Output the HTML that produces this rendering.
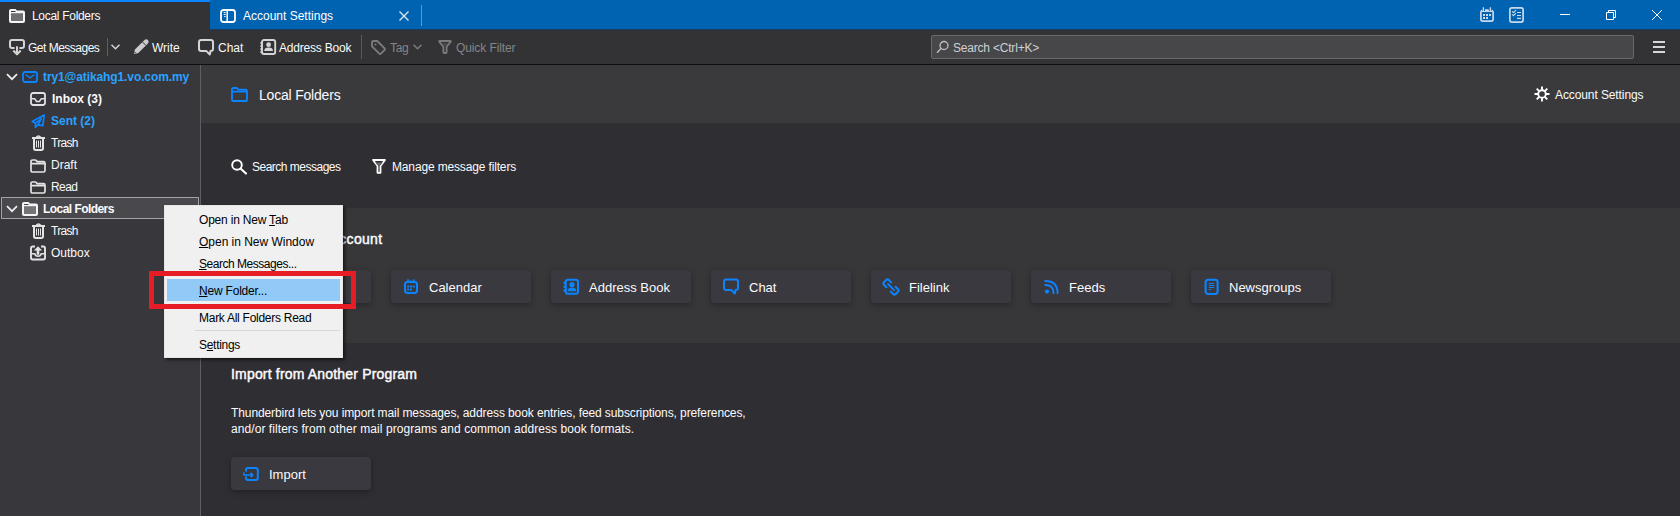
<!DOCTYPE html>
<html><head><meta charset="utf-8">
<style>
*{box-sizing:border-box;margin:0;padding:0}
html,body{width:1680px;height:516px;overflow:hidden;background:#2f2e33;font-family:"Liberation Sans",sans-serif;color:#f9f9fa}
.a{position:absolute}
.t{position:absolute;white-space:nowrap;line-height:1}
svg{position:absolute;overflow:visible}
</style></head><body>

<!-- titlebar -->
<div class="a" style="left:0;top:0;width:1680px;height:29px;background:#0063b1"></div>
<div class="a" style="left:0;top:0;width:210px;height:29px;background:#333335"></div>
<div class="a" style="left:0;top:0;width:210px;height:2px;background:#0a84ff"></div>
<div class="a" style="left:421px;top:5px;width:1px;height:21px;background:rgba(255,255,255,0.35)"></div>

<!-- toolbar -->
<div class="a" style="left:0;top:29px;width:1680px;height:35px;background:#333335"></div>
<div class="a" style="left:210px;top:29px;width:1470px;height:1px;background:#183d63"></div>
<div class="a" style="left:0;top:64px;width:1680px;height:1px;background:#0e0e0f"></div>

<!-- folder pane -->
<div class="a" style="left:0;top:65px;width:200px;height:451px;background:#38373c"></div>
<div class="a" style="left:200px;top:65px;width:1px;height:451px;background:#5f5e63"></div>

<!-- content sections -->
<div class="a" style="left:201px;top:65px;width:1479px;height:58px;background:#3a3a3d"></div>
<div class="a" style="left:201px;top:123px;width:1479px;height:85px;background:#2f2e33"></div>
<div class="a" style="left:201px;top:208px;width:1479px;height:135px;background:#373739"></div>
<div class="a" style="left:201px;top:343px;width:1479px;height:173px;background:#2f2e33"></div>


<!-- titlebar content -->
<svg style="left:9px;top:9px" width="16" height="14" viewBox="0 0 16 14"><path d="M0 2 Q0 0 2 0 H6.5 L8 1.5 H14 Q16 1.5 16 3.5 V12 Q16 14 14 14 H2 Q0 14 0 12 Z" fill="#f4f4f5"/><rect x="2" y="2" width="4.5" height="1" fill="#333335"/><rect x="2" y="4.2" width="12" height="7.8" fill="#6f6f72"/></svg>
<div class="t" style="left:32px;top:10px;font-size:12px;color:#fbfbfe;letter-spacing:-0.3px">Local Folders</div>

<svg style="left:220px;top:9px" width="16" height="14" viewBox="0 0 16 14"><rect x="1" y="1" width="14" height="12" rx="2.5" fill="none" stroke="#fff" stroke-width="1.8"/><path d="M7.2 1 V13" stroke="#fff" stroke-width="1.5"/><path d="M3.7 3.5 H5.6 M3.7 5.5 H5.6 M4.2 7.5 H5.6" stroke="#fff" stroke-width="1"/></svg>
<div class="t" style="left:243px;top:10px;font-size:12px;color:#fff">Account Settings</div>
<svg style="left:399px;top:11px" width="10" height="10" viewBox="0 0 10 10"><path d="M0.5 0.5 L9.5 9.5 M9.5 0.5 L0.5 9.5" stroke="#dce6f1" stroke-width="1.4"/></svg>

<svg style="left:1480px;top:7px" width="14" height="15" viewBox="0 0 14 15"><path d="M2.4 3.3 Q0.9 3.6 0.9 5.2 V12.2 Q0.9 14.1 2.8 14.1 H11.2 Q13.1 14.1 13.1 12.2 V5.2 Q13.1 3.6 11.6 3.3" fill="none" stroke="#c9d9ec" stroke-width="1.7"/><path d="M3.4 0.2 V4 M10.4 0.2 V4" stroke="#c9d9ec" stroke-width="1.3"/><path d="M5 2.3h3.8v1.6h-3.8z M3 6.9h2v2.1h-2z M6 6.9h2v2.1h-2z M9 6.9h2v2.1h-2z M3 10h2v2h-2z M6 10h2v2h-2z M1 4h12v0.9h-12z" fill="#c9d9ec"/></svg>
<svg style="left:1509px;top:7px" width="15" height="16" viewBox="0 0 15 16"><rect x="0.9" y="0.9" width="13.2" height="14.2" rx="2" fill="none" stroke="#c9d9ec" stroke-width="1.7"/><path d="M3.2 4.4 L4.5 5.7 L6.9 3.2 M3.2 7.4 L4.5 8.7 L6.9 6.2" fill="none" stroke="#c9d9ec" stroke-width="1.1"/><path d="M8 5 h4v1.1h-4z M8 8 h4v1.1h-4z M8 10.8 h4v1.1h-4z" fill="#c9d9ec"/></svg>
<div class="a" style="left:1560px;top:14px;width:10px;height:1px;background:#fff"></div>
<svg style="left:1606px;top:10px" width="10" height="10" viewBox="0 0 10 10"><path d="M0.5 2.5 H7.5 V9.5 H0.5 Z M2.5 2.5 V0.5 H9.5 V7.5 H7.5" fill="none" stroke="#fff" stroke-width="1"/></svg>
<svg style="left:1652px;top:10px" width="10" height="10" viewBox="0 0 10 10"><path d="M0 0 L10 10 M10 0 L0 10" stroke="#fff" stroke-width="1"/></svg>

<!-- toolbar content -->
<svg style="left:9px;top:39px" width="16" height="17" viewBox="0 0 16 17"><path d="M5.6 9 H3 Q1 9 1 7 V3 Q1 1 3 1 H13 Q15 1 15 3 V7 Q15 9 13 9 H10.4" fill="none" stroke="#d4d4d6" stroke-width="2"/><path d="M8 7.2 V14.5" stroke="#d4d4d6" stroke-width="2"/><path d="M4.3 11.6 L8 15.3 L11.7 11.6" fill="none" stroke="#d4d4d6" stroke-width="2.1" stroke-linejoin="round"/></svg>
<div class="t" style="left:28px;top:42px;font-size:12px;letter-spacing:-0.5px">Get Messages</div>
<div class="a" style="left:107px;top:38px;width:1px;height:18px;background:#606062"></div>
<svg style="left:111px;top:44px" width="9" height="6" viewBox="0 0 9 6"><path d="M0.5 0.8 L4.5 4.8 L8.5 0.8" fill="none" stroke="#d4d4d6" stroke-width="1.5"/></svg>
<svg style="left:133px;top:39px" width="16" height="16" viewBox="0 0 16 16"><path d="M0.8 15.2 L1.9 10.6 L11.5 1.0 Q13.2 -0.7 14.9 1.0 Q16.6 2.7 14.9 4.4 L5.3 14.0 Z" fill="#cbcbcd"/><path d="M9.5 3.0 L12.9 6.4" stroke="#333335" stroke-width="1"/><path d="M1.6 12.6 L3.3 14.3 L1.4 14.6 Z" fill="#333335"/></svg>
<div class="t" style="left:152px;top:42px;font-size:12px">Write</div>
<svg style="left:198px;top:39px" width="17" height="17" viewBox="0 0 17 17"><path d="M8.2 11.9 H3.2 Q1 11.9 1 9.7 V3.2 Q1 1 3.2 1 H12.8 Q15 1 15 3.2 V9.7 Q15 11.9 12.8 11.9 H12.5 L11.8 15.6 Z" fill="none" stroke="#d4d4d6" stroke-width="2" stroke-linejoin="round"/></svg>
<div class="t" style="left:218px;top:42px;font-size:12px">Chat</div>
<svg style="left:259px;top:39px" width="18" height="16" viewBox="0 0 18 16"><rect x="3" y="1" width="13.2" height="14" rx="2" fill="none" stroke="#d4d4d6" stroke-width="1.9"/><circle cx="2.6" cy="4" r="1.3" fill="#d4d4d6"/><circle cx="2.6" cy="7" r="1.3" fill="#d4d4d6"/><circle cx="2.6" cy="10" r="1.3" fill="#d4d4d6"/><circle cx="2.6" cy="13" r="1.3" fill="#d4d4d6"/><circle cx="9.6" cy="5.7" r="2.4" fill="#d4d4d6"/><path d="M5.2 12 Q5.2 8.6 9.6 8.6 Q14 8.6 14 12 Z" fill="#d4d4d6"/></svg>
<div class="t" style="left:279px;top:42px;font-size:12px;letter-spacing:-0.2px">Address Book</div>
<div class="a" style="left:361px;top:35px;width:1px;height:24px;background:#58585a"></div>
<svg style="left:371px;top:40px" width="15" height="15" viewBox="0 0 15 15"><path d="M1 2.5 Q1 1 2.5 1 H6.3 L13.6 8.3 Q14.4 9.1 13.6 9.9 L9.9 13.6 Q9.1 14.4 8.3 13.6 L1 6.3 Z" fill="none" stroke="#7b7b7d" stroke-width="1.9" stroke-linejoin="round"/><rect x="3.6" y="3.6" width="1.8" height="1.8" fill="#7b7b7d"/></svg>
<div class="t" style="left:390px;top:42px;font-size:12px;color:#858587;letter-spacing:-0.3px">Tag</div>
<svg style="left:413px;top:44px" width="9" height="6" viewBox="0 0 9 6"><path d="M0.5 0.8 L4.5 4.8 L8.5 0.8" fill="none" stroke="#7b7b7d" stroke-width="1.5"/></svg>
<svg style="left:438px;top:40px" width="14" height="14" viewBox="0 0 14 14"><path d="M1.8 1 H12.2 Q13.2 1 12.6 1.9 L8.6 6.8 V12.2 Q8.6 13 7.8 13 H6.2 Q5.4 13 5.4 12.2 V6.8 L1.4 1.9 Q0.8 1 1.8 1 Z" fill="none" stroke="#7b7b7d" stroke-width="1.8" stroke-linejoin="round"/><path d="M3.6 3.3 H10.4 L8.4 5.8 H5.6 Z" fill="#4c4c4e"/></svg>
<div class="t" style="left:456px;top:42px;font-size:12px;color:#858587;letter-spacing:-0.1px">Quick Filter</div>

<div class="a" style="left:931px;top:35px;width:703px;height:24px;background:#474749;border:1px solid #6a6a6c;border-radius:2px"></div>
<svg style="left:936px;top:40px" width="13" height="14" viewBox="0 0 13 14"><circle cx="8" cy="5.5" r="4" fill="none" stroke="#bdbdbf" stroke-width="1.3"/><path d="M5.2 8.3 L1 12.8" stroke="#bdbdbf" stroke-width="1.4"/></svg>
<div class="t" style="left:953px;top:42px;font-size:12px;color:#d0d0d2;letter-spacing:-0.2px">Search &lt;Ctrl+K&gt;</div>
<div class="a" style="left:1653px;top:41px;width:12px;height:2px;background:#d6d6d8"></div>
<div class="a" style="left:1653px;top:46px;width:12px;height:2px;background:#d6d6d8"></div>
<div class="a" style="left:1653px;top:51px;width:12px;height:2px;background:#d6d6d8"></div>


<!-- folder pane content -->
<div class="a" style="left:1px;top:197px;width:198px;height:22px;background:#49484d;border:1px solid #a3a3a6"></div>
<svg style="left:6px;top:73px" width="12" height="8" viewBox="0 0 12 8"><path d="M1 1.2 L6 6.2 L11 1.2" fill="none" stroke="#eee" stroke-width="1.7"/></svg>
<svg style="left:22px;top:71px" width="16" height="12" viewBox="0 0 16 12"><rect x="1" y="1" width="14" height="10" rx="2" fill="none" stroke="#0a84ff" stroke-width="1.8"/><path d="M3.5 3.5 L8 6.8 L12.5 3.5" fill="none" stroke="#0a84ff" stroke-width="1.4"/></svg>
<div class="t" style="left:43px;top:71px;font-size:12px;font-weight:bold;color:#2aa3ff;letter-spacing:-0.1px">try1@atikahg1.vo.com.my</div>

<svg style="left:30px;top:92px" width="16" height="14" viewBox="0 0 16 14"><rect x="1" y="1" width="14" height="12" rx="2.2" fill="none" stroke="#e3e3e5" stroke-width="1.8"/><path d="M1.5 6.8 H4.9 L6.3 9.1 Q6.6 9.4 7 9.4 H9 Q9.4 9.4 9.7 9.1 L11.1 6.8 H14.5" fill="none" stroke="#e3e3e5" stroke-width="1.5" stroke-linejoin="round"/></svg>
<div class="t" style="left:52px;top:93px;font-size:12px;font-weight:bold;color:#fbfbfe">Inbox (3)</div>

<svg style="left:31px;top:114px" width="15" height="15" viewBox="0 0 15 15"><path d="M13.2 1 L1.2 7.6 L4.6 9.2 L4.4 13.2 L7 10.8 L11.8 11.6 Z M4.6 9.2 L10.2 4.6 L7 10.8" fill="none" stroke="#0a84ff" stroke-width="1.7" stroke-linejoin="round"/></svg>
<div class="t" style="left:51px;top:115px;font-size:12px;font-weight:bold;color:#2aa3ff">Sent (2)</div>

<svg style="left:32px;top:135px" width="13" height="16" viewBox="0 0 13 16"><path d="M4.2 2.4 Q6.5 -0.6 8.8 2.4" fill="none" stroke="#e3e3e5" stroke-width="1.5"/><path d="M0 3 H13" stroke="#e3e3e5" stroke-width="2"/><path d="M2 4 V13.3 Q2 15 3.7 15 H9.3 Q11 15 11 13.3 V4" fill="none" stroke="#e3e3e5" stroke-width="2"/><path d="M4.5 5.5 V12.5 M6.5 5.5 V12.5 M8.5 5.5 V12.5" stroke="#e3e3e5" stroke-width="1"/></svg>
<div class="t" style="left:51px;top:137px;font-size:12px;letter-spacing:-0.7px">Trash</div>

<svg style="left:30px;top:159px" width="16" height="14" viewBox="0 0 16 14"><path d="M1 2.6 Q1 1 2.6 1 H5.6 L7.2 2.6 H13.4 Q15 2.6 15 4.2 V11.4 Q15 13 13.4 13 H2.6 Q1 13 1 11.4 Z M1 4.6 H15" fill="none" stroke="#e3e3e5" stroke-width="1.7" stroke-linejoin="round"/></svg>
<div class="t" style="left:51px;top:159px;font-size:12px">Draft</div>

<svg style="left:30px;top:181px" width="16" height="13" viewBox="0 0 16 13"><path d="M1 2.6 Q1 1 2.6 1 H5.6 L7.2 2.6 H13.4 Q15 2.6 15 4.2 V10.4 Q15 12 13.4 12 H2.6 Q1 12 1 10.4 Z M1 4.6 H15" fill="none" stroke="#e3e3e5" stroke-width="1.7" stroke-linejoin="round"/></svg>
<div class="t" style="left:51px;top:181px;font-size:12px;letter-spacing:-0.6px">Read</div>

<svg style="left:6px;top:205px" width="12" height="8" viewBox="0 0 12 8"><path d="M1 1.2 L6 6.2 L11 1.2" fill="none" stroke="#eee" stroke-width="1.7"/></svg>
<svg style="left:22px;top:202px" width="16" height="14" viewBox="0 0 16 14"><path d="M0 2 Q0 0 2 0 H6.5 L8 1.5 H14 Q16 1.5 16 3.5 V12 Q16 14 14 14 H2 Q0 14 0 12 Z" fill="#f4f4f5"/><rect x="2" y="2" width="4.5" height="1" fill="#49484d"/><rect x="2" y="4.2" width="12" height="7.8" fill="#747478"/></svg>
<div class="t" style="left:43px;top:203px;font-size:12px;font-weight:bold;color:#fbfbfe;letter-spacing:-0.55px">Local Folders</div>

<svg style="left:32px;top:223px" width="13" height="16" viewBox="0 0 13 16"><path d="M4.2 2.4 Q6.5 -0.6 8.8 2.4" fill="none" stroke="#e3e3e5" stroke-width="1.5"/><path d="M0 3 H13" stroke="#e3e3e5" stroke-width="2"/><path d="M2 4 V13.3 Q2 15 3.7 15 H9.3 Q11 15 11 13.3 V4" fill="none" stroke="#e3e3e5" stroke-width="2"/><path d="M4.5 5.5 V12.5 M6.5 5.5 V12.5 M8.5 5.5 V12.5" stroke="#e3e3e5" stroke-width="1"/></svg>
<div class="t" style="left:51px;top:225px;font-size:12px;letter-spacing:-0.7px">Trash</div>

<svg style="left:30px;top:245px" width="16" height="16" viewBox="0 0 16 16"><path d="M5 1.5 H2.7 Q1 1.5 1 3.2 V12.8 Q1 14.5 2.7 14.5 H13.3 Q15 14.5 15 12.8 V3.2 Q15 1.5 13.3 1.5 H11" fill="none" stroke="#e3e3e5" stroke-width="1.9"/><path d="M1.5 8.8 H4.8 Q5.3 11.2 8 11.2 Q10.7 11.2 11.2 8.8 H14.5" fill="none" stroke="#e3e3e5" stroke-width="1.5"/><path d="M8 1.3 L12.2 5.6 H9.3 V9.8 H6.7 V5.6 H3.8 Z" fill="#e3e3e5"/></svg>
<div class="t" style="left:51px;top:247px;font-size:12px">Outbox</div>


<!-- content header -->
<svg style="left:231px;top:87px" width="17" height="15" viewBox="0 0 17 15"><path d="M1 2.6 Q1 1 2.6 1 H5.8 L7.4 2.6 H14.4 Q16 2.6 16 4.2 V12.4 Q16 14 14.4 14 H2.6 Q1 14 1 12.4 Z M1.5 4.6 H15.5" fill="none" stroke="#0a84ff" stroke-width="1.9" stroke-linejoin="round"/></svg>
<div class="t" style="left:259px;top:88px;font-size:14px;color:#fbfbfe;letter-spacing:-0.2px">Local Folders</div>
<svg style="left:1534px;top:86px" width="16" height="16" viewBox="0 0 16 16"><circle cx="8" cy="8" r="3.8" fill="none" stroke="#fff" stroke-width="1.9"/><path d="M8 0.5 V4 M8 12 V15.5 M0.5 8 H4 M12 8 H15.5 M2.7 2.7 L5.2 5.2 M10.8 10.8 L13.3 13.3 M13.3 2.7 L10.8 5.2 M5.2 10.8 L2.7 13.3" stroke="#fff" stroke-width="1.9"/></svg>
<div class="t" style="left:1555px;top:89px;font-size:12px;color:#fbfbfe;letter-spacing:-0.1px">Account Settings</div>

<svg style="left:231px;top:159px" width="16" height="15" viewBox="0 0 16 15"><circle cx="6" cy="6" r="4.8" fill="none" stroke="#fff" stroke-width="1.9"/><path d="M9.5 9.5 L15 14.6" stroke="#fff" stroke-width="2.1" stroke-linecap="round"/></svg>
<div class="t" style="left:252px;top:161px;font-size:12px;color:#fbfbfe;letter-spacing:-0.5px">Search messages</div>
<svg style="left:372px;top:159px" width="14" height="15" viewBox="0 0 14 15"><path d="M1 1 H13 L8.5 7 V13.8 H5.5 V7 Z" fill="none" stroke="#fff" stroke-width="1.8" stroke-linejoin="round"/><path d="M3.2 3.5 H10.8 L8.6 6.2 H5.4 Z" fill="#6a6a6d"/></svg>
<div class="t" style="left:392px;top:161px;font-size:12px;color:#fbfbfe;letter-spacing:-0.15px">Manage message filters</div>

<div class="t" style="left:231px;top:232px;font-size:14px;color:#fbfbfe;letter-spacing:0.3px;-webkit-text-stroke:0.45px #fbfbfe">Set up another account</div>
<div class="a" style="left:231px;top:270px;width:140px;height:33px;background:#3a393f;border-radius:4px;box-shadow:0 2px 6px rgba(0,0,0,0.3)"><div class="t" style="left:38px;top:11px;font-size:13px;color:#fbfbfe">Email</div></div>
<div class="a" style="left:391px;top:270px;width:140px;height:33px;background:#3a393f;border-radius:4px;box-shadow:0 2px 6px rgba(0,0,0,0.3)"><svg style="left:12px;top:8px" width="16" height="17" viewBox="0 0 16 17"><rect x="2" y="4" width="12" height="11" rx="2.4" fill="none" stroke="#0a84ff" stroke-width="2"/><path d="M5 1.3 V5 M11 1.3 V5" stroke="#0a84ff" stroke-width="1.5"/><path d="M6.6 2.6h2.8v1.9h-2.8z M4.2 7.4h2v2h-2z M7 7.4h2v2h-2z M9.8 7.4h2v2h-2z M4.2 10.4h2v2h-2z M7 10.4h2v2h-2z" fill="#0a84ff"/></svg><div class="t" style="left:38px;top:11px;font-size:13px;color:#fbfbfe">Calendar</div></div>
<div class="a" style="left:551px;top:270px;width:140px;height:33px;background:#3a393f;border-radius:4px;box-shadow:0 2px 6px rgba(0,0,0,0.3)"><svg style="left:11px;top:8px" width="18" height="18" viewBox="0 0 18 18"><rect x="3.8" y="1.8" width="12.2" height="14" rx="2.2" fill="none" stroke="#0a84ff" stroke-width="2"/><circle cx="2.8" cy="5" r="1.4" fill="#0a84ff"/><circle cx="2.8" cy="8.8" r="1.4" fill="#0a84ff"/><circle cx="2.8" cy="12.6" r="1.4" fill="#0a84ff"/><circle cx="10" cy="6.6" r="2.6" fill="#0a84ff"/><path d="M5.6 13.2 Q5.6 9.6 10 9.6 Q14.4 9.6 14.4 13.2 Z" fill="#0a84ff"/></svg><div class="t" style="left:38px;top:11px;font-size:13px;color:#fbfbfe">Address Book</div></div>
<div class="a" style="left:711px;top:270px;width:140px;height:33px;background:#3a393f;border-radius:4px;box-shadow:0 2px 6px rgba(0,0,0,0.3)"><svg style="left:12px;top:8px" width="17" height="17" viewBox="0 0 17 17"><path d="M8.2 11.9 H3.2 Q1 11.9 1 9.7 V3.7 Q1 1.5 3.2 1.5 H12.8 Q15 1.5 15 3.7 V9.7 Q15 11.9 12.8 11.9 H12.5 L11.8 15.6 Z" fill="none" stroke="#0a84ff" stroke-width="2" stroke-linejoin="round"/></svg><div class="t" style="left:38px;top:11px;font-size:13px;color:#fbfbfe">Chat</div></div>
<div class="a" style="left:871px;top:270px;width:140px;height:33px;background:#3a393f;border-radius:4px;box-shadow:0 2px 6px rgba(0,0,0,0.3)"><svg style="left:11px;top:8px" width="18" height="18" viewBox="0 0 18 18"><path d="M9.2 4.4 L6.8 2 Q5.5 0.7 4.2 2 L2 4.2 Q0.7 5.5 2 6.8 L4.4 9.2" fill="none" stroke="#0a84ff" stroke-width="2" stroke-linecap="round"/><path d="M8.8 13.6 L11.2 16 Q12.5 17.3 13.8 16 L16 13.8 Q17.3 12.5 16 11.2 L13.6 8.8" fill="none" stroke="#0a84ff" stroke-width="2" stroke-linecap="round"/><path d="M6 6 L12 12" stroke="#0a84ff" stroke-width="1.8" stroke-linecap="round"/></svg><div class="t" style="left:38px;top:11px;font-size:13px;color:#fbfbfe">Filelink</div></div>
<div class="a" style="left:1031px;top:270px;width:140px;height:33px;background:#3a393f;border-radius:4px;box-shadow:0 2px 6px rgba(0,0,0,0.3)"><svg style="left:13px;top:9px" width="16" height="16" viewBox="0 0 16 16"><path d="M1.2 2 Q13.6 2 13.6 14.2 M1.2 6 Q9.6 6 9.6 14.2" fill="none" stroke="#0a84ff" stroke-width="1.9" stroke-linecap="round"/><circle cx="3" cy="12.6" r="2.1" fill="#0a84ff"/></svg><div class="t" style="left:38px;top:11px;font-size:13px;color:#fbfbfe">Feeds</div></div>
<div class="a" style="left:1191px;top:270px;width:140px;height:33px;background:#3a393f;border-radius:4px;box-shadow:0 2px 6px rgba(0,0,0,0.3)"><svg style="left:13px;top:8px" width="16" height="17" viewBox="0 0 16 17"><rect x="1.6" y="1.7" width="12" height="14.3" rx="2.4" fill="none" stroke="#0a84ff" stroke-width="2.1"/><path d="M4.8 5.5 H10.2 M4.8 7.5 H10.2 M4.8 9.5 H10.2 M4.8 11.5 H7" stroke="#0a84ff" stroke-width="1.1"/></svg><div class="t" style="left:38px;top:11px;font-size:13px;color:#fbfbfe">Newsgroups</div></div>

<div class="t" style="left:231px;top:367px;font-size:14px;color:#fbfbfe;letter-spacing:0.18px;-webkit-text-stroke:0.45px #fbfbfe">Import from Another Program</div>
<div class="t" style="left:231px;top:407px;font-size:12px;color:#fbfbfe;letter-spacing:-0.1px">Thunderbird lets you import mail messages, address book entries, feed subscriptions, preferences,</div>
<div class="t" style="left:231px;top:423px;font-size:12px;color:#fbfbfe;letter-spacing:0.07px">and/or filters from other mail programs and common address book formats.</div>
<div class="a" style="left:231px;top:457px;width:140px;height:33px;background:#3a393f;border-radius:4px;box-shadow:0 2px 6px rgba(0,0,0,0.3)">
<svg style="left:12px;top:10px" width="17" height="15" viewBox="0 0 17 15"><path d="M3 4.6 V3 Q3 1 5 1 H12.8 Q14.8 1 14.8 3 V11 Q14.8 13 12.8 13 H5 Q3 13 3 11 V9.6" fill="none" stroke="#0a84ff" stroke-width="2"/><path d="M0.9 5.2 V8.1 H9.6 M7.5 5.9 L9.8 8.1 L7.5 10.3" fill="none" stroke="#0a84ff" stroke-width="1.5" stroke-linejoin="round"/></svg>
<div class="t" style="left:38px;top:11px;font-size:13px;color:#fbfbfe">Import</div></div>


<!-- context menu -->
<div class="a" style="left:164px;top:205px;width:179px;height:153px;background:#f0f0f0;box-shadow:2px 2px 3px rgba(0,0,0,0.55);border:1px solid #e6e6e6"></div>
<div class="a" style="left:167px;top:279px;width:173px;height:22px;background:#91c9f7"></div>
<div class="a" style="left:195px;top:330px;width:145px;height:1px;background:#d7d7d7"></div>
<div class="t" style="left:199px;top:214px;font-size:12px;color:#000;letter-spacing:-0.2px">Open in New <u>T</u>ab</div>
<div class="t" style="left:199px;top:236px;font-size:12px;color:#000;letter-spacing:-0.02px"><u>O</u>pen in New Window</div>
<div class="t" style="left:199px;top:258px;font-size:12px;color:#000;letter-spacing:-0.47px"><u>S</u>earch Messages...</div>
<div class="t" style="left:199px;top:285px;font-size:12px;color:#000;letter-spacing:-0.2px"><u>N</u>ew Folder...</div>
<div class="t" style="left:199px;top:312px;font-size:12px;color:#000;letter-spacing:-0.27px">Mark All Folders Read</div>
<div class="t" style="left:199px;top:339px;font-size:12px;color:#000;letter-spacing:-0.3px">S<u>e</u>ttings</div>
<div class="a" style="left:149px;top:271px;width:207px;height:38px;border:5px solid #e71d25"></div>

</body></html>
